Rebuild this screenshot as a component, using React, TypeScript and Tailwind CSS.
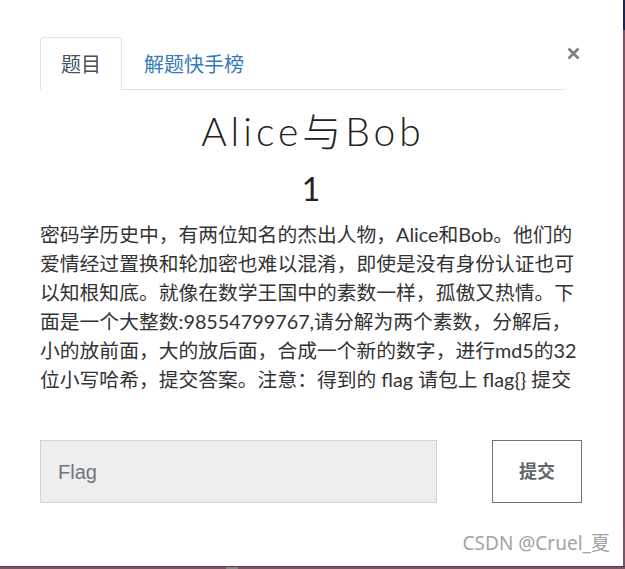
import React from "react";

const lines = [
  "密码学历史中，有两位知名的杰出人物，Alice和Bob。他们的",
  "爱情经过置换和轮加密也难以混淆，即使是没有身份认证也可",
  "以知根知底。就像在数学王国中的素数一样，孤傲又热情。下",
  "面是一个大整数:98554799767,请分解为两个素数，分解后，",
  "小的放前面，大的放后面，合成一个新的数字，进行md5的32",
  "位小写哈希，提交答案。注意：得到的 flag 请包上 flag{} 提交",
];

export default function App() {
  return (
    <div className="w-[625px] h-[569px] bg-[#7c5465] flex flex-col overflow-hidden">
      <div className="flex h-[566px]">
        <div
          className="relative w-[623px] h-[566px] bg-white pt-[37px] pl-[40px] pr-[41px] flex flex-col"
          style={{ fontFamily: "Lato, 'Noto Sans CJK SC', sans-serif" }}
        >
          {/* tabs row */}
          <div className="flex">
            <ul className="flex-1 flex border-b border-[#dee2e6]">
              <li className="-mb-px h-[53px] px-[20px] flex items-center border border-[#dee2e6] border-b-white rounded-t-[4px] bg-white text-[20px] text-[#495057]">
                题目
              </li>
              <li className="-mb-px h-[53px] px-[21px] flex items-center border border-transparent text-[20px] text-[#337ab7]">
                解题快手榜
              </li>
            </ul>
            <div className="ml-[2px] w-[15px] mt-[10px]">
              <svg width="13" height="13" viewBox="0 0 13 13">
                <path d="M1.5 1.5 L11.5 11.5 M11.5 1.5 L1.5 11.5" stroke="#7f7f7f" strokeWidth="2.6" strokeLinecap="butt" />
              </svg>
            </div>
          </div>

          <h1 className="mt-[18px] pl-[4px] text-center text-[39px] leading-[47px] font-light text-[#222] tracking-[4px]">
            Alice与Bob
          </h1>
          <div className="mt-[15px] text-center text-[32px] leading-[38px] text-[#222]">1</div>

          <div className="mt-[12px] text-[19.8px] leading-[29px] text-[#333] whitespace-nowrap">
            {lines.map((l, i) => (
              <div key={i}>{l}</div>
            ))}
          </div>

          <div className="mt-[46px] flex items-center justify-between">
            <div
              className="w-[397px] h-[63px] bg-[#eeeeee] border border-[#ced4da] pl-[17px] flex items-center text-[20px] text-[#6c757d]"
              style={{ fontFamily: "'Liberation Sans', Arial, sans-serif" }}
            >
              Flag
            </div>
            <button className="w-[90px] h-[63px] border border-[#6c757d] bg-white text-[18px] font-bold text-[#5f666d] flex items-center justify-center">
              提交
            </button>
          </div>

          <div
            className="absolute right-[13px] bottom-[9px] text-[19px] text-[#a3a3a3]"
            style={{ fontFamily: "'Noto Sans', 'Noto Sans CJK SC', sans-serif" }}
          >
            CSDN @Cruel_夏
          </div>
        </div>
        <div className="w-[2px] flex flex-col">
          <div className="h-[30px] bg-[#1c2550]" />
          <div className="flex-1 bg-[#7c5465]" />
        </div>
      </div>
      <div className="h-[1px] bg-[#5a3a48]" />
      <div className="flex-1 flex">
        <div className="w-[226px]" />
        <div className="w-[12px] bg-[#8a8a8a]" />
      </div>
    </div>
  );
}
